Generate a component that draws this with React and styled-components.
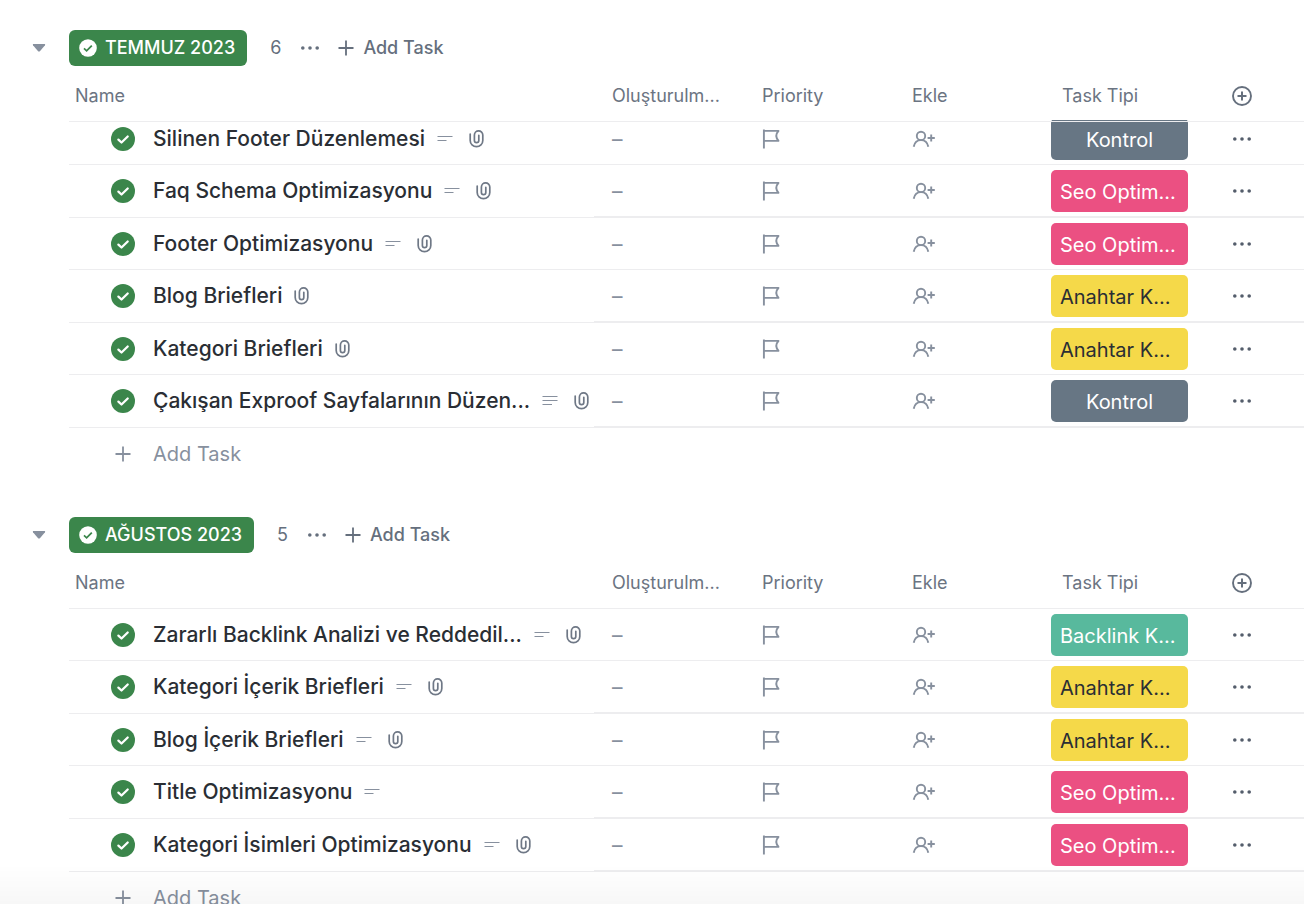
import React from "react";
import styled, { createGlobalStyle } from "styled-components";

const GlobalStyle = createGlobalStyle`
  *, *::before, *::after { box-sizing: border-box; }
  body {
    margin: 0;
    background: #fff;
    color: #2a2e34;
    font-family: Inter, "Liberation Sans", sans-serif;
  }
  svg { display: block; flex: none; }
`;

const Page = styled.main`
  height: 100vh;
  overflow: hidden;
  padding: 30px 0 0 69px;
  display: flex;
  flex-direction: column;
  gap: 37px;
`;

const BottomFade = styled.div`
  position: fixed;
  left: 0;
  right: 0;
  bottom: 0;
  height: 40px;
  pointer-events: none;
  background: linear-gradient(rgba(0, 0, 0, 0), rgba(0, 0, 0, 0.03));
`;

const Group = styled.section`
  flex: none;
`;

const PlainButton = styled.button`
  display: inline-flex;
  align-items: center;
  justify-content: center;
  flex: none;
  margin: 0;
  padding: 0;
  border: 0;
  background: none;
  color: ${(p) => p.$color || "#656f7d"};
  font: inherit;
  cursor: pointer;
`;

const GroupHeader = styled.header`
  display: flex;
  align-items: center;
  height: 36px;
  margin: 0 0 4px -37px;
  color: #656f7d;
  font-size: 18px;
  line-height: 24px;
`;

const Caret = styled(PlainButton)`
  width: 14px;
  margin-right: 23px;
`;

const StatusBadge = styled.h2`
  display: flex;
  align-items: center;
  gap: 8px;
  height: 36px;
  margin: 0;
  padding: 0 12px 0 10px;
  border-radius: 6px;
  background: #3b864b;
  color: #fff;
  font-size: 18px;
  font-weight: 500;
  white-space: nowrap;
`;

const Count = styled.span`
  margin: 0 19px 0 23px;
`;

const AddInline = styled(PlainButton)`
  gap: 9px;
  margin-left: 18px;
  font-weight: 500;
`;

const Table = styled.table`
  display: block;
  width: 100%;
`;

const Head = styled.thead`
  display: block;
  position: relative;
  z-index: 1;
  padding-bottom: 1px;
  border-bottom: 1px solid #ededef;
  background: #fff content-box;
`;

const Body = styled.tbody`
  display: block;
  margin-top: ${(p) => (p.$scrolled ? "-9px" : "0")};
`;

const Row = styled.tr`
  display: grid;
  grid-template-columns: minmax(0, 1fr) repeat(4, 150px) 110px;
`;

const HeadCell = styled.th`
  display: flex;
  align-items: center;
  height: 50px;
  padding: 2px 18px 0;
  color: #6b7482;
  font-size: 18px;
  font-weight: 400;
  line-height: 24px;
  white-space: nowrap;

  &:first-child { padding-left: 6px; }
  &:last-child { padding: 2px 14px 0 0; justify-content: center; }
`;

const Cell = styled.td`
  display: flex;
  align-items: center;
  padding: 5px 18px 4px;
  border-bottom: 1px solid #ededef;
  color: #87909e;
  font-size: 21px;

  tr:nth-child(even) > &,
  tr:last-child > & {
    border-bottom-width: 2px;
  }
`;

const NameCell = styled(Cell)`
  padding: 5px 0 4px 42px;

  tr:nth-child(even) > &,
  tr:last-child > & {
    padding-bottom: 5px;
    border-bottom-width: 1px;
  }
`;

const TagCell = styled(Cell)`
  padding-left: 7px;
  padding-right: 6px;
`;

const MoreCell = styled(Cell)`
  justify-content: center;
  padding-left: 0;
  padding-right: 14px;
`;

const TaskLink = styled.a`
  margin-left: 18px;
  color: #2a2e34;
  font-size: 21px;
  font-weight: 500;
  line-height: 28px;
  text-decoration: none;
  white-space: nowrap;
`;

const TaskMarks = styled.span`
  display: flex;
  align-items: center;
  gap: 16px;
  margin-left: 12px;
`;

const tagColors = {
  kontrol: ["#677684", "#fff"],
  seo: ["#eb5082", "#fff"],
  keyword: ["#f5d949", "#2a2e34"],
  backlink: ["#58b99d", "#fff"],
};

const Tag = styled(PlainButton)`
  width: 100%;
  height: 42px;
  padding: 2px 9px 0;
  justify-content: ${(p) => (p.$kind === "kontrol" ? "center" : "flex-start")};
  overflow: hidden;
  border-radius: 5px;
  background: ${(p) => tagColors[p.$kind][0]};
  color: ${(p) => tagColors[p.$kind][1]};
  font-size: 20px;
  line-height: 28px;
  white-space: nowrap;
`;

const AddRow = styled(PlainButton)`
  gap: 22px;
  height: 52px;
  padding-left: 46px;
  font-size: 20px;
  line-height: 28px;
`;

const CaretIcon = () => (
  <svg width="14" height="10" viewBox="0 0 14 10" aria-hidden="true">
    <path d="M1.6 1h10.8c.7 0 1 .7.6 1.2L8.100 8c-.6.7-1.600.7-2.200 0L1 2.200C.6 1.700.9 1 1.600 1z" fill="#87909e" />
  </svg>
);

const BadgeCheck = () => (
  <svg width="18" height="18" viewBox="0 0 18 18" aria-hidden="true">
    <circle cx="9" cy="9" r="8.8" fill="#fff" />
    <path d="M5 9.400l2.600 2.400 5.200-5.200" fill="none" stroke="#3b864b" strokeWidth="1.8" />
  </svg>
);

const DoneIcon = () => (
  <svg width="24" height="24" viewBox="0 0 24 24" aria-hidden="true">
    <circle cx="12" cy="12" r="12" fill="#3b864b" />
    <path d="M7.400 12.600l3.100 2.900 6.200-6" fill="none" stroke="#fff" strokeWidth="2.300" strokeLinecap="round" strokeLinejoin="round" />
  </svg>
);

const DotsIcon = ({ color }) => (
  <svg width="20" height="6" viewBox="0 0 20 6" fill={color} aria-hidden="true">
    <circle cx="2.800" cy="3" r="1.800" />
    <circle cx="10" cy="3" r="1.800" />
    <circle cx="17.200" cy="3" r="1.800" />
  </svg>
);

const PlusIcon = () => (
  <svg width="16" height="16" viewBox="0 0 16 16" aria-hidden="true">
    <path d="M8 .5v15M.5 8h15" stroke="currentColor" strokeWidth="1.800" />
  </svg>
);

const PlusCircleIcon = () => (
  <svg width="20" height="20" viewBox="0 0 20 20" fill="none" stroke="#656f7d" strokeWidth="1.900" aria-hidden="true">
    <circle cx="10" cy="10" r="9" />
    <path d="M10 5.500v9M5.500 10h9" strokeWidth="2" />
  </svg>
);

const LinesIcon = ({ count }) => (
  <svg width="16" height="14" viewBox="0 0 16 14" stroke="#87909e" strokeWidth="1.200" aria-hidden="true">
    {count === 3 ? (
      <path d="M.5 2.500h15M.5 6.500h15M.5 10.500h9.500" />
    ) : (
      <path d="M.5 4.500h15M.5 8.500h9" />
    )}
  </svg>
);

const ClipIcon = () => (
  <svg width="15" height="20" viewBox="0 0 15 20" fill="none" stroke="#6f7886" strokeWidth="1.700" strokeLinecap="round" aria-hidden="true">
    <path d="M1.200 5v6.400a6.300 6.300 0 0 0 12.600 0V6.100a4.200 4.200 0 0 0-8.400 0v5.400a2.200 2.200 0 0 0 4.400 0V6.300" />
  </svg>
);

const FlagIcon = () => (
  <svg width="18" height="20" viewBox="0 0 18 20" fill="none" stroke="#87909e" strokeWidth="1.900" aria-hidden="true">
    <path d="M1.900.4v19.200M1.900 1.900h14.600c-2.900 3.200-2.900 6.600 0 10H1.900" strokeLinejoin="round" />
  </svg>
);

const AssignIcon = () => (
  <svg width="24" height="18" viewBox="0 0 24 18" fill="none" stroke="#87909e" strokeWidth="1.900" aria-hidden="true">
    <circle cx="9" cy="5.900" r="4.200" />
    <path d="M1.700 16.800C2.500 12.700 5.300 10.100 9 10.100s6.500 2.600 7.300 6.700" />
    <path d="M19.200 4.500v7M15.600 8h7.200" />
  </svg>
);

const labels = {
  kontrol: "Kontrol",
  seo: "Seo Optim...",
  keyword: "Anahtar K...",
  backlink: "Backlink K...",
};

const groups = [
  {
    title: "TEMMUZ 2023",
    scrolled: true,
    tasks: [
      { name: "Silinen Footer Düzenlemesi", lines: 2, clip: true, kind: "kontrol" },
      { name: "Faq Schema Optimizasyonu", lines: 2, clip: true, kind: "seo" },
      { name: "Footer Optimizasyonu", lines: 2, clip: true, kind: "seo" },
      { name: "Blog Briefleri", clip: true, kind: "keyword" },
      { name: "Kategori Briefleri", clip: true, kind: "keyword" },
      { name: "Çakışan Exproof Sayfalarının Düzen...", lines: 3, clip: true, kind: "kontrol" },
    ],
  },
  {
    title: "AĞUSTOS 2023",
    tasks: [
      { name: "Zararlı Backlink Analizi ve Reddedil...", lines: 2, clip: true, kind: "backlink" },
      { name: "Kategori İçerik Briefleri", lines: 2, clip: true, kind: "keyword" },
      { name: "Blog İçerik Briefleri", lines: 2, clip: true, kind: "keyword" },
      { name: "Title Optimizasyonu", lines: 2, kind: "seo" },
      { name: "Kategori İsimleri Optimizasyonu", lines: 2, clip: true, kind: "seo" },
    ],
  },
];

const TaskRow = ({ task }) => (
  <Row>
    <NameCell>
      <PlainButton type="button"><DoneIcon /></PlainButton>
      <TaskLink href="#">{task.name}</TaskLink>
      <TaskMarks>
        {task.lines && <LinesIcon count={task.lines} />}
        {task.clip && <ClipIcon />}
      </TaskMarks>
    </NameCell>
    <Cell>–</Cell>
    <Cell><PlainButton type="button"><FlagIcon /></PlainButton></Cell>
    <Cell><PlainButton type="button"><AssignIcon /></PlainButton></Cell>
    <TagCell><Tag type="button" $kind={task.kind}>{labels[task.kind]}</Tag></TagCell>
    <MoreCell><PlainButton type="button"><DotsIcon color="#545d6b" /></PlainButton></MoreCell>
  </Row>
);

const TaskGroup = ({ group }) => (
  <Group>
    <GroupHeader>
      <Caret type="button"><CaretIcon /></Caret>
      <StatusBadge><BadgeCheck />{group.title}</StatusBadge>
      <Count>{group.tasks.length}</Count>
      <PlainButton type="button"><DotsIcon color="#656f7d" /></PlainButton>
      <AddInline type="button"><PlusIcon />Add Task</AddInline>
    </GroupHeader>
    <Table>
      <Head>
        <Row>
          <HeadCell scope="col">Name</HeadCell>
          <HeadCell scope="col">Oluşturulm...</HeadCell>
          <HeadCell scope="col">Priority</HeadCell>
          <HeadCell scope="col">Ekle</HeadCell>
          <HeadCell scope="col">Task Tipi</HeadCell>
          <HeadCell scope="col"><PlainButton type="button"><PlusCircleIcon /></PlainButton></HeadCell>
        </Row>
      </Head>
      <Body $scrolled={group.scrolled}>
        {group.tasks.map((task) => <TaskRow key={task.name} task={task} />)}
      </Body>
    </Table>
    <AddRow type="button" $color="#87909e"><PlusIcon />Add Task</AddRow>
  </Group>
);

export default function App() {
  return (
    <>
      <GlobalStyle />
      <Page>
        {groups.map((group) => <TaskGroup key={group.title} group={group} />)}
      </Page>
      <BottomFade />
    </>
  );
}
